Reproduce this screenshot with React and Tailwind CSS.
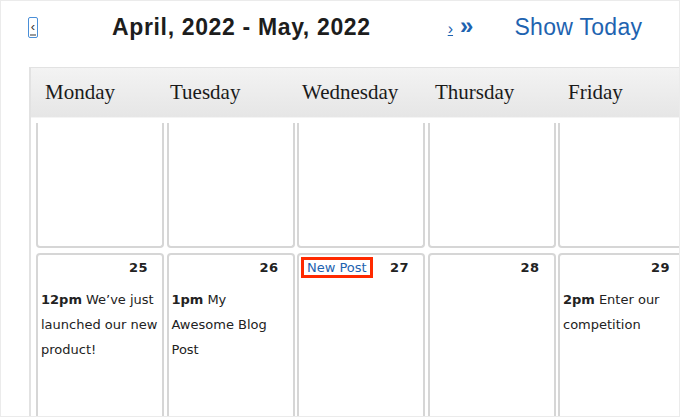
import React from "react";

const sans = { fontFamily: '"Liberation Sans", Arial, sans-serif' };
const serif = { fontFamily: '"Liberation Serif", "Times New Roman", serif' };
const dv = { fontFamily: '"DejaVu Sans", Verdana, sans-serif' };

function Cell({ num, lines, first, extra, width }) {
  return (
    <div
      className={`shrink-0 border-2 border-[#d6d6d6] bg-white ${
        first ? "border-t-0 rounded-b-[4px] h-[125px]" : "rounded-[4px] h-[200px]"
      } ${width}`}
    >
      {!first && (
        <div className="px-[3px] text-[13px] text-[#222]" style={dv}>
          <div className="flex items-center justify-between h-[25px] pr-[11px]">
            <div>{extra}</div>
            <span className="font-bold tracking-[0.5px]">{num}</span>
          </div>
          {lines && (
            <div className="mt-[7px] flex flex-col">
              {lines.map((l, i) => (
                <div key={i} className="h-[25px] leading-[25px] whitespace-nowrap flex gap-[4px]">
                  {l.b && <span className="font-bold">{l.b}</span>}
                  <span>{l.t}</span>
                </div>
              ))}
            </div>
          )}
        </div>
      )}
    </div>
  );
}

export default function App() {
  const w = "w-[128px]";
  return (
    <div className="w-[680px] h-[417px] overflow-hidden border border-[#ebebeb] bg-white flex flex-col">
      <div className="h-[52px] shrink-0 flex items-center" style={sans}>
        <div className="ml-[27px] w-[10px] h-[21px] border border-[#4a8fd8] rounded-[2px] flex flex-col items-center justify-center relative">
          <span className="text-[13px] leading-none text-[#333] -mt-[2px]">‹</span>
          <div className="absolute left-[1px] right-[1px] bottom-[1px] h-[2px] bg-[#9a9a9a]" />
        </div>
        <div className="ml-[74px] text-[23px] font-bold text-[#1d1d1d] tracking-[0.65px] whitespace-nowrap">
          April, 2022 - May, 2022
        </div>
        <div className="ml-[77px] flex items-center">
          <span className="text-[16px] text-[#1e63b0] underline mt-[4px]">›</span>
          <span className="ml-[7px] text-[24px] text-[#1e63b0] font-bold leading-none -mt-[3px]">»</span>
        </div>
        <div className="ml-[41px] text-[23px] text-[#1e63b0] tracking-[0.3px] whitespace-nowrap">Show Today</div>
      </div>
      <div className="mt-[14px] ml-[28px] w-[700px] flex-1 border-l-2 border-t border-[#e2e2e2] flex flex-col">
        <div
          className="h-[50px] shrink-0 flex items-center bg-gradient-to-b from-[#f3f3f3] to-[#e6e6e6] border-b border-[#f4f4f4] text-[21px] text-[#1a1a1a]"
          style={serif}
        >
          <div className="w-[139px] pl-[14px] shrink-0">Monday</div>
          <div className="w-[132px] shrink-0">Tuesday</div>
          <div className="w-[133px] shrink-0">Wednesday</div>
          <div className="w-[133px] shrink-0">Thursday</div>
          <div className="shrink-0">Friday</div>
        </div>
        <div className="pl-[5px] flex flex-col gap-[5px]">
          <div className="flex gap-[2.5px] mt-[5px]">
            {[0, 1, 2, 3, 4].map((i) => (
              <Cell key={i} first width={w} />
            ))}
          </div>
          <div className="flex gap-[2.5px]">
            <Cell
              num="25"
              width={w}
              lines={[{ b: "12pm", t: "We’ve just" }, { t: "launched our new" }, { t: "product!" }]}
            />
            <Cell
              num="26"
              width={w}
              lines={[{ b: "1pm", t: "My" }, { t: "Awesome Blog" }, { t: "Post" }]}
            />
            <Cell
              num="27"
              width={w}
              extra={
                <div className="ml-[-1px] border-[3px] border-[#ff2a00] h-[21px] px-[3px] flex items-center">
                  <span className="text-[13px] leading-none text-[#1e63b0]">New Post</span>
                </div>
              }
            />
            <Cell num="28" width={w} />
            <Cell
              num="29"
              width={w}
              lines={[{ b: "2pm", t: "Enter our" }, { t: "competition" }]}
            />
          </div>
        </div>
      </div>
    </div>
  );
}
